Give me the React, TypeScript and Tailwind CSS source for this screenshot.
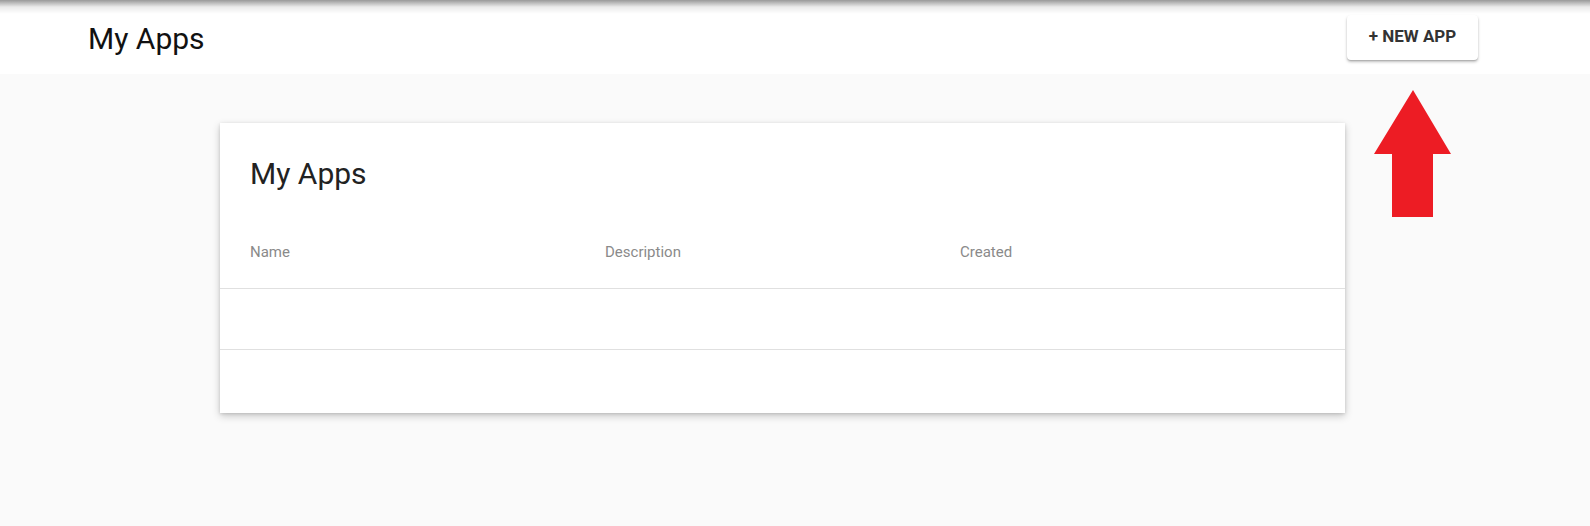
const columns = ['Name', 'Description', 'Created'];

const UpArrow = () => (
  <svg
    className="absolute left-[1373px] top-[89px]"
    width="80"
    height="130"
    viewBox="0 0 80 130"
  >
    <polygon points="40,1 78,65 60,65 60,128 19,128 19,65 1,65" fill="#ed1c24" />
  </svg>
);

const App = () => {
  return (
    <div className="relative min-h-[526px] bg-[#fafafa] font-['Roboto',sans-serif]">
      <header className="relative flex h-[74px] items-center justify-between bg-white pl-[88px] pr-[112px]">
        <div className="pointer-events-none absolute inset-x-0 top-0 h-[14px] bg-gradient-to-b from-black/40 via-black/8 to-transparent" />
        <h1 className="pt-[4px] text-[30px] leading-[36px] font-normal text-[#111]">My Apps</h1>
        <button className="h-[45px] w-[131px] rounded-[4px] bg-white text-[17px] font-bold text-[#333] shadow-[0_2px_3px_rgba(0,0,0,0.25),0_1px_1px_rgba(0,0,0,0.12)]">
          + NEW APP
        </button>
      </header>

      <main className="pt-[49px] pb-[60px]">
        <section className="ml-[220px] w-[1125px] bg-white shadow-[0_3px_8px_rgba(0,0,0,0.2),0_1px_3px_rgba(0,0,0,0.12)]">
          <h2 className="px-[30px] pt-[33px] text-[30px] leading-[36px] font-normal text-[#222]">My Apps</h2>
          <div className="mt-[24px] grid h-[72px] grid-cols-3 items-center px-[30px] text-[15px] text-[#8a8a8a]">
            {columns.map((c) => (
              <span key={c}>{c}</span>
            ))}
          </div>
          <div className="h-[61px] border-t border-[#e0e0e0]" />
          <div className="h-[64px] border-t border-[#e0e0e0]" />
        </section>
      </main>

      <UpArrow />
    </div>
  );
};

export default App;
